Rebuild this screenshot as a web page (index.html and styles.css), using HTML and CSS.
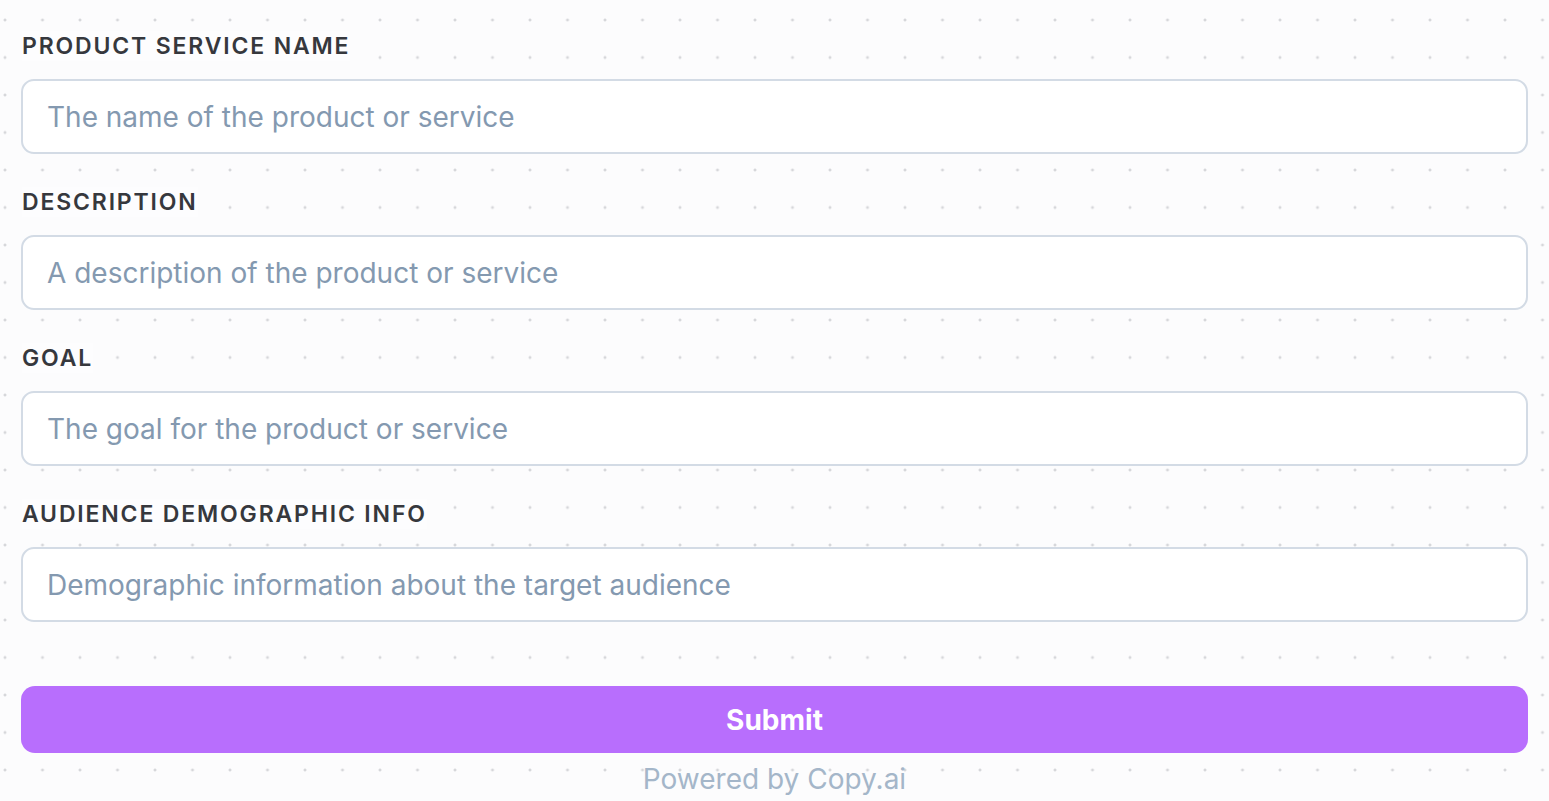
FILE: index.html
```html
<!DOCTYPE html>
<html lang="en">
<head>
<meta charset="utf-8">
<title>Form</title>
<link rel="stylesheet" href="styles.css">
</head>
<body>
<form class="form">
  <div class="field">
    <label class="label">Product Service Name</label>
    <input class="input" type="text" placeholder="The name of the product or service">
  </div>
  <div class="field">
    <label class="label">Description</label>
    <input class="input" type="text" placeholder="A description of the product or service">
  </div>
  <div class="field">
    <label class="label">Goal</label>
    <input class="input" type="text" placeholder="The goal for the product or service">
  </div>
  <div class="field">
    <label class="label">Audience Demographic Info</label>
    <input class="input" type="text" placeholder="Demographic information about the target audience">
  </div>
  <button class="submit" type="button">Submit</button>
  <div class="powered">Powered by Copy.ai</div>
</form>
</body>
</html>
```
FILE: styles.css
```css
html, body {
  margin: 0;
  height: 100%;
}
body {
  background-color: #fcfcfd;
  background-image: radial-gradient(circle, #d6d7da 1.3px, transparent 1.7px);
  background-size: 37.5px 37.5px;
  background-position: -13.75px 1.25px;
  font-family: Inter, "Noto Sans", sans-serif;
  overflow: hidden;
}
.form {
  display: flex;
  flex-direction: column;
  padding: 30px 21px 0 21px;
}
.field {
  display: flex;
  flex-direction: column;
  align-items: flex-start;
  margin-bottom: 32px;
}
.label {
  font-size: 23px;
  line-height: 30px;
  font-weight: 600;
  letter-spacing: 0.08em;
  text-transform: uppercase;
  color: #36383d;
  background: #fdfdfe;
  margin: 1px 0 18px 1px;
}
.input {
  box-sizing: border-box;
  width: 100%;
  height: 75px;
  border: 2px solid #d3dbe5;
  border-radius: 13px;
  background: #ffffff;
  padding: 0 24px;
  font-family: Inter, "Noto Sans", sans-serif;
  font-size: 28px;
  color: #1f2937;
  outline: none;
}
.input::placeholder {
  color: #8499b0;
}
.submit {
  margin-top: 32px;
  height: 67px;
  border: none;
  border-radius: 14px;
  background: #b86efd;
  color: #ffffff;
  font-family: Inter, "Noto Sans", sans-serif;
  font-size: 28px;
  font-weight: 700;
  cursor: pointer;
}
.powered {
  text-align: center;
  font-size: 28px;
  line-height: 52px;
  color: #a4b6c9;
}
```
